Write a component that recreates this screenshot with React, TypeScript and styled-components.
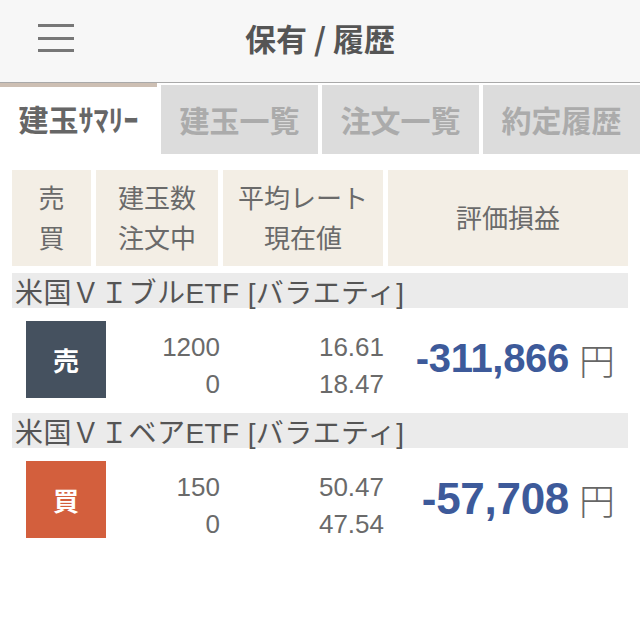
import React from "react";
import styled, { createGlobalStyle } from "styled-components";

const GlobalStyle = createGlobalStyle`
  html, body {
    margin: 0;
    padding: 0;
    background: #ffffff;
  }
  body {
    font-family: "Liberation Sans", "Noto Sans CJK JP", sans-serif;
    color: #666666;
  }
  * { box-sizing: border-box; }
`;

const Page = styled.div`
  width: 640px;
  min-height: 629px;
  background: #ffffff;
`;

const Header = styled.header`
  position: relative;
  height: 83px;
  background: #f7f7f7;
  border-bottom: 1px solid #a9a9a9;
  display: flex;
  align-items: center;
  justify-content: center;
  padding-bottom: 7px;
`;

const MenuButton = styled.button`
  position: absolute;
  left: 38px;
  top: 24px;
  width: 36px;
  height: 28px;
  padding: 0;
  border: 0;
  background: transparent;
  display: flex;
  flex-direction: column;
  justify-content: space-between;
`;

const MenuLine = styled.span`
  display: block;
  width: 36px;
  height: 3px;
  background: #777777;
`;

const Title = styled.h1`
  margin: 0;
  font-size: 31px;
  font-weight: 700;
  color: #555555;
  font-family: "Noto Sans CJK JP", sans-serif;
`;

const Tabs = styled.nav`
  display: flex;
  gap: 4px;
  height: 72px;
`;

const Tab = styled.div<{ $active?: boolean }>`
  flex: 1;
  display: flex;
  align-items: center;
  justify-content: center;
  font-family: "Noto Sans CJK JP", sans-serif;
  font-size: 30px;
  font-weight: 700;
  color: ${(p) => (p.$active ? "#666666" : "#ababab")};
  background: ${(p) => (p.$active ? "#ffffff" : "#dcdcdc")};
  border-top: ${(p) => (p.$active ? "4px solid #cdbfb3" : "0")};
  margin: ${(p) => (p.$active ? "0" : "2px 0 1px")};
  padding-bottom: ${(p) => (p.$active ? "6px" : "2px")};
`;

const Content = styled.main`
  padding: 15px 12px 0;
`;

const HeadRow = styled.div`
  display: grid;
  grid-template-columns: 79px 122px 160px 1fr;
  gap: 5px;
  height: 96px;
  margin-bottom: 7px;
`;

const HeadCell = styled.div`
  background: #f3eee5;
  display: flex;
  flex-direction: column;
  align-items: center;
  justify-content: center;
  font-family: "Noto Sans CJK JP", sans-serif;
  font-size: 26px;
  line-height: 40px;
  color: #6a6a6a;
  padding-bottom: 2px;
`;

const Product = styled.section``;

const ProductName = styled.div`
  height: 35px;
  background: #ebebeb;
  padding-left: 3px;
  display: flex;
  align-items: center;
  font-size: 28px;
  letter-spacing: 0.4px;
  color: #555555;
  white-space: nowrap;
`;

const Body = styled.div`
  height: 105px;
  padding-top: 13px;
  display: grid;
  grid-template-columns: 94px 114px 164px 1fr;
  align-items: start;
`;

const Badge = styled.div<{ $side: "sell" | "buy" }>`
  margin-left: 14px;
  width: 80px;
  height: 77px;
  background: ${(p) => (p.$side === "sell" ? "#45515f" : "#d35f3d")};
  color: #ffffff;
  display: flex;
  align-items: center;
  justify-content: center;
  font-family: "Noto Sans CJK JP", sans-serif;
  font-size: 26px;
  font-weight: 700;
`;

const Numbers = styled.div`
  padding-top: 8px;
  text-align: right;
  font-size: 26px;
  line-height: 37px;
  color: #6a6a6a;
`;

const Amount = styled.div`
  height: 77px;
  display: flex;
  align-items: center;
  justify-content: flex-end;
  padding-right: 13px;
  padding-bottom: 2px;
  white-space: nowrap;
`;

const Value = styled.span<{ $size: number }>`
  font-size: ${(p) => p.$size}px;
  font-weight: 700;
  color: #3d5a9a;
  letter-spacing: -0.3px;
`;

const Yen = styled.span`
  margin-left: 10px;
  font-family: "Noto Sans CJK JP", sans-serif;
  font-size: 36px;
  color: #666666;
  font-weight: 300;
`;

type Position = {
  name: string;
  side: "sell" | "buy";
  qty: string;
  pending: string;
  avg: string;
  current: string;
  pl: string;
  size: number;
};

const positions: Position[] = [
  {
    name: "米国ＶＩブルETF [バラエティ]",
    side: "sell",
    qty: "1200",
    pending: "0",
    avg: "16.61",
    current: "18.47",
    pl: "-311,866",
    size: 40,
  },
  {
    name: "米国ＶＩベアETF [バラエティ]",
    side: "buy",
    qty: "150",
    pending: "0",
    avg: "50.47",
    current: "47.54",
    pl: "-57,708",
    size: 44,
  },
];

export default function App() {
  return (
    <Page>
      <GlobalStyle />
      <Header>
        <MenuButton aria-label="menu">
          <MenuLine />
          <MenuLine />
          <MenuLine />
        </MenuButton>
        <Title>保有 / 履歴</Title>
      </Header>
      <Tabs>
        <Tab $active>建玉ｻﾏﾘｰ</Tab>
        <Tab>建玉一覧</Tab>
        <Tab>注文一覧</Tab>
        <Tab>約定履歴</Tab>
      </Tabs>
      <Content>
        <HeadRow>
          <HeadCell>
            <span>売</span>
            <span>買</span>
          </HeadCell>
          <HeadCell>
            <span>建玉数</span>
            <span>注文中</span>
          </HeadCell>
          <HeadCell>
            <span>平均レート</span>
            <span>現在値</span>
          </HeadCell>
          <HeadCell>
            <span>評価損益</span>
          </HeadCell>
        </HeadRow>
        {positions.map((p) => (
          <Product key={p.name}>
            <ProductName>{p.name}</ProductName>
            <Body>
              <Badge $side={p.side}>{p.side === "sell" ? "売" : "買"}</Badge>
              <Numbers>
                <div>{p.qty}</div>
                <div>{p.pending}</div>
              </Numbers>
              <Numbers>
                <div>{p.avg}</div>
                <div>{p.current}</div>
              </Numbers>
              <Amount>
                <Value $size={p.size}>{p.pl}</Value>
                <Yen>円</Yen>
              </Amount>
            </Body>
          </Product>
        ))}
      </Content>
    </Page>
  );
}
